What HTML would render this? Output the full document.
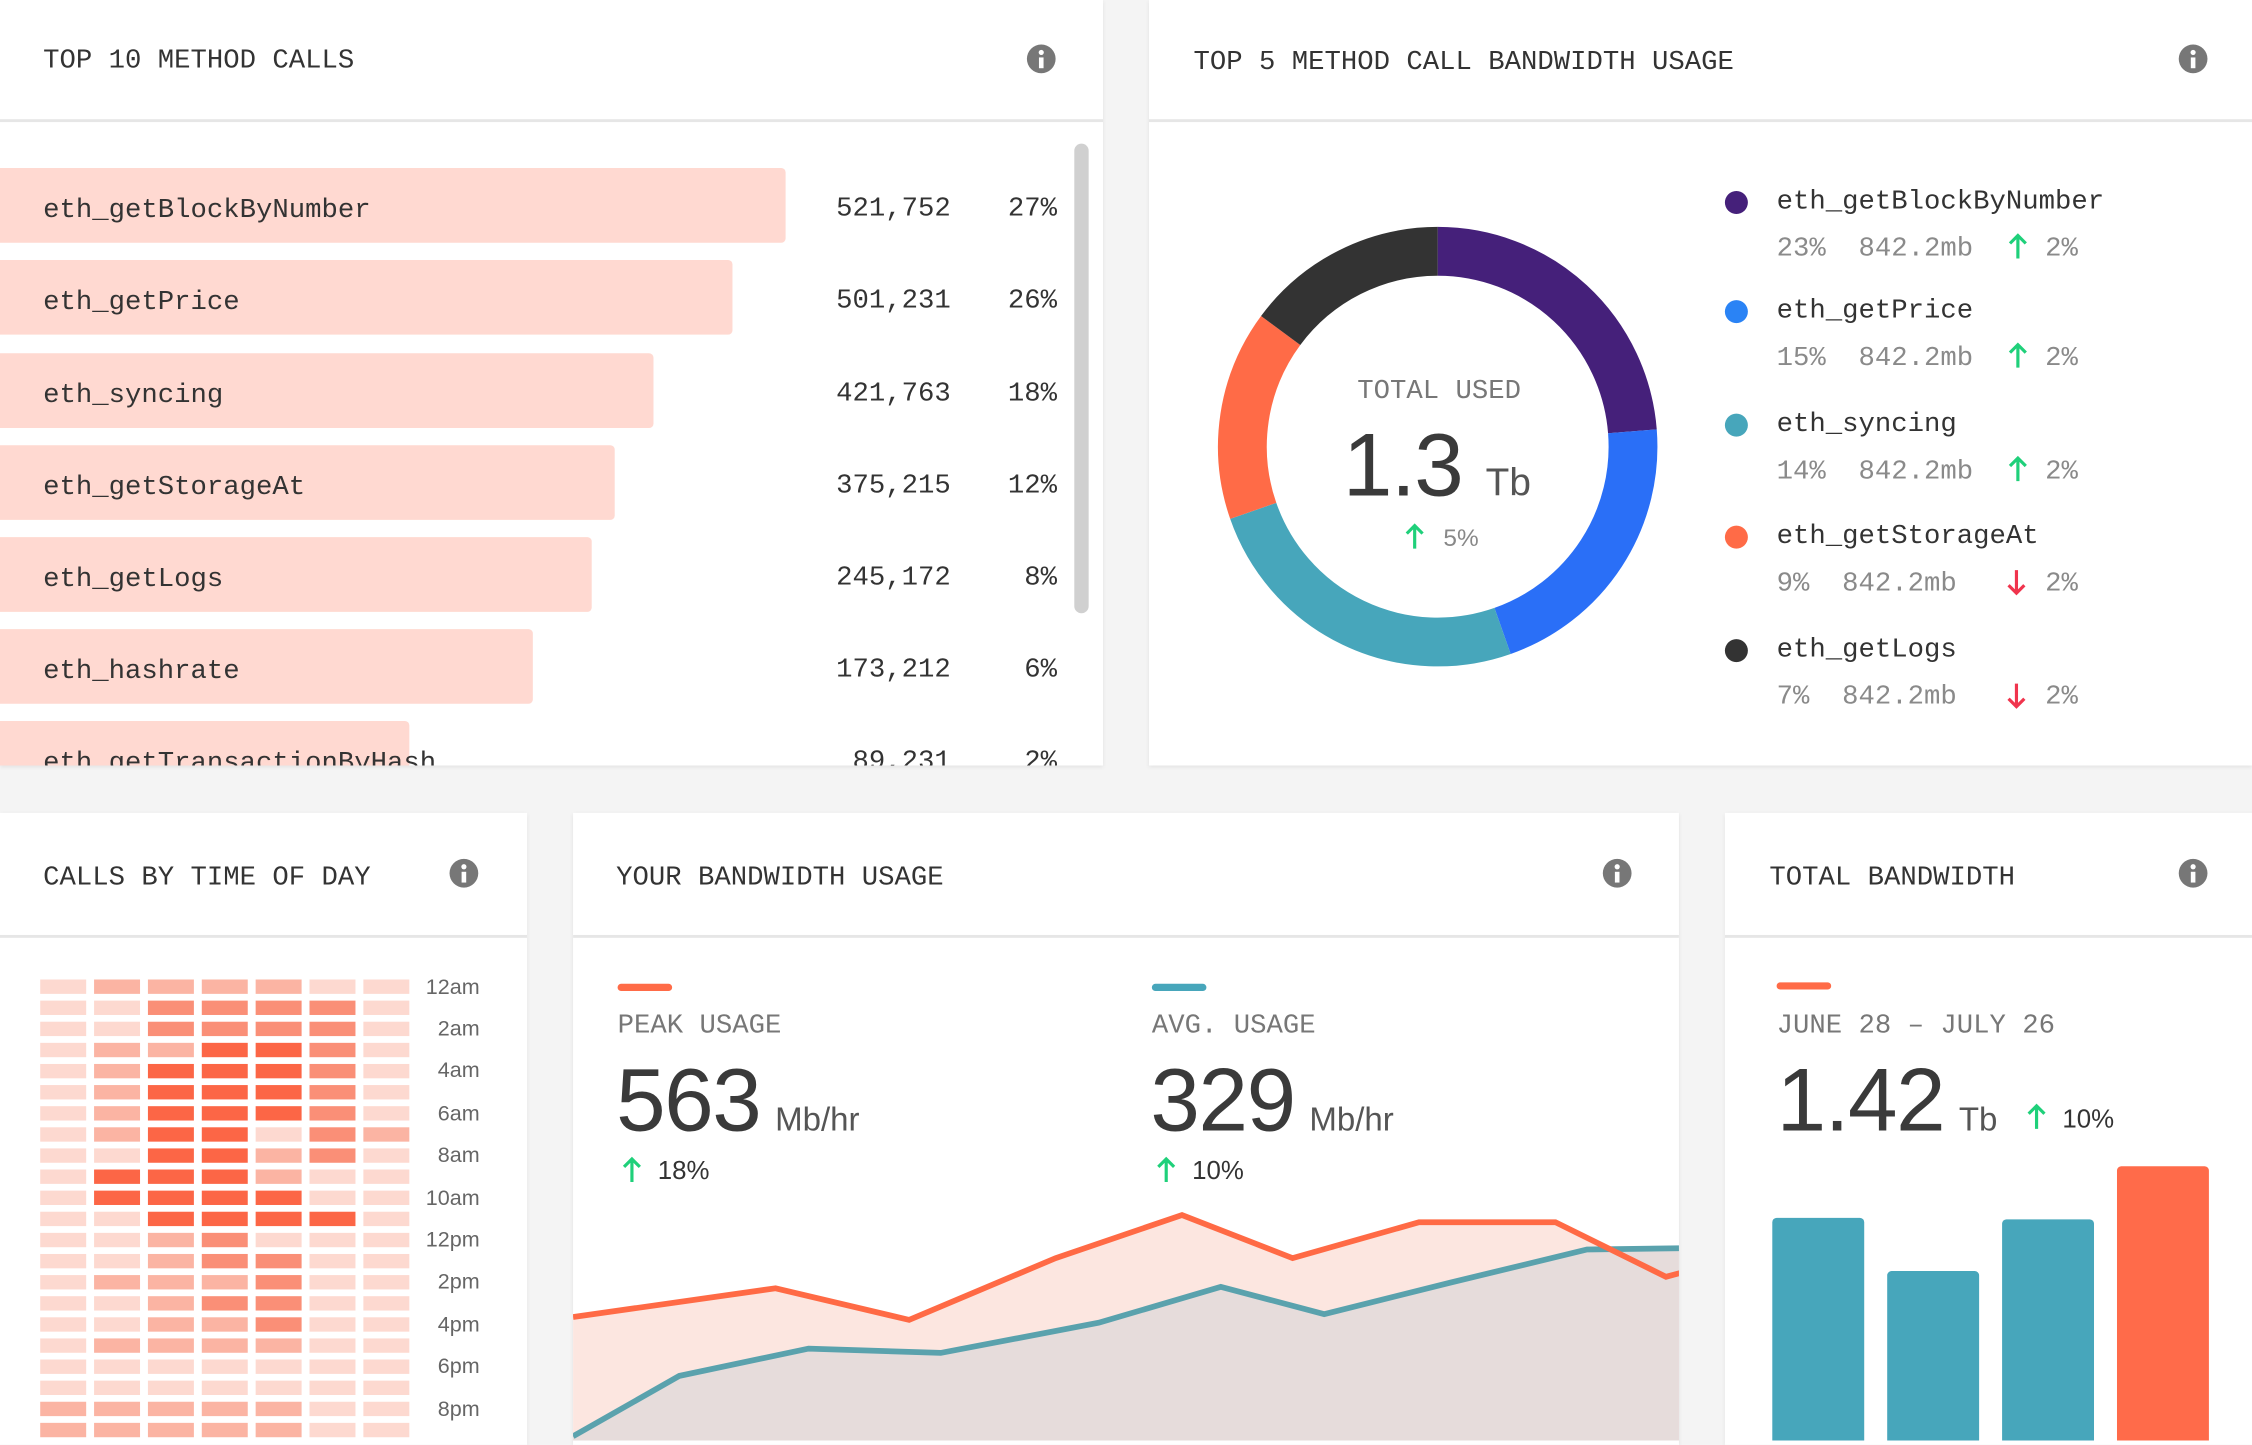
<!DOCTYPE html>
<html><head><meta charset="utf-8"><style>
html,body{margin:0;padding:0;width:2252px;height:1440px;overflow:hidden;background:#f4f4f4}
#w{position:absolute;left:0;top:0;width:1568px;height:1003px;transform:scale(1.43622);transform-origin:0 0;font-family:"Liberation Mono",monospace;color:#333}
.card{position:absolute;background:#fff;box-shadow:0 1px 3px rgba(0,0,0,.08);overflow:hidden}
.hd{position:absolute;left:0;right:0;top:0;border-bottom:2px solid #e6e6e6}
.t{position:absolute;font-size:19px;white-space:pre;line-height:1}
.bar{position:absolute;left:0;height:52px;background:#ffd9d1;border-radius:0 3px 3px 0}
.nm{position:absolute;left:30px;font-size:19px;line-height:52px;margin-top:3px}
.num{position:absolute;right:106px;font-size:19px;line-height:52px;text-align:right;margin-top:2px}
.pc{position:absolute;right:32px;font-size:19px;line-height:52px;text-align:right;margin-top:2px}
.g{color:#8a8a8a}
.sans{font-family:"Liberation Sans",sans-serif}
.big{font-family:"Liberation Sans",sans-serif;font-size:62px;color:#3a3a3a;line-height:1;position:absolute;white-space:nowrap;letter-spacing:-1px}
.big span{font-size:23px;color:#555;letter-spacing:0;margin-left:-6px}
.hl{position:absolute;font-size:15px;color:#666;font-family:"Liberation Sans",sans-serif;text-align:right;width:60px;line-height:1}
rect.h{width:32px;height:10px}
.c1{fill:#fdd9d0}.c2{fill:#fbb4a3}.c3{fill:#fa8f77}.c4{fill:#fc6646}
</style></head><body><div id="w">

<div class="card" style="left:0;top:0;width:768px;height:533px">
 <div class="hd" style="height:83px"></div>
 <div class="t" style="left:30px;top:33px">TOP 10 METHOD CALLS</div>
 <div class="bar" style="top:117px;width:547px"></div><div class="nm" style="top:117px">eth_getBlockByNumber</div><div class="num" style="top:117px">521,752</div><div class="pc" style="top:117px">27%</div>
 <div class="bar" style="top:181px;width:510px"></div><div class="nm" style="top:181px">eth_getPrice</div><div class="num" style="top:181px">501,231</div><div class="pc" style="top:181px">26%</div>
 <div class="bar" style="top:246px;width:455px"></div><div class="nm" style="top:246px">eth_syncing</div><div class="num" style="top:246px">421,763</div><div class="pc" style="top:246px">18%</div>
 <div class="bar" style="top:310px;width:428px"></div><div class="nm" style="top:310px">eth_getStorageAt</div><div class="num" style="top:310px">375,215</div><div class="pc" style="top:310px">12%</div>
 <div class="bar" style="top:374px;width:412px"></div><div class="nm" style="top:374px">eth_getLogs</div><div class="num" style="top:374px">245,172</div><div class="pc" style="top:374px">8%</div>
 <div class="bar" style="top:438px;width:371px"></div><div class="nm" style="top:438px">eth_hashrate</div><div class="num" style="top:438px">173,212</div><div class="pc" style="top:438px">6%</div>
 <div class="bar" style="top:502px;width:285px"></div><div class="nm" style="top:502px">eth_getTransactionByHash</div><div class="num" style="top:502px">89,231</div><div class="pc" style="top:502px">2%</div>
 <div style="position:absolute;left:748px;top:100px;width:10px;height:327px;background:#d0d0d0;border-radius:5px"></div>
</div>

<div class="card" style="left:800px;top:0;width:768px;height:533px">
 <div class="hd" style="height:83px"></div>
 <div class="t" style="left:31px;top:34px">TOP 5 METHOD CALL BANDWIDTH USAGE</div>
 <div class="t g" style="left:145px;top:263px;color:#777">TOTAL USED</div>
 <div class="big" style="left:135px;top:294px">1.3 <span style="font-size:27px;margin-left:0">Tb</span></div>
 <div class="t sans g" style="left:205px;top:366px;font-size:17px;color:#888">5%</div>
 <div class="t" style="left:437px;top:131px">eth_getBlockByNumber</div>
 <div class="t g" style="left:437px;top:164px">23%  842.2mb</div><div class="t g" style="left:624px;top:164px">2%</div>
 <div class="t" style="left:437px;top:207px">eth_getPrice</div>
 <div class="t g" style="left:437px;top:240px">15%  842.2mb</div><div class="t g" style="left:624px;top:240px">2%</div>
 <div class="t" style="left:437px;top:286px">eth_syncing</div>
 <div class="t g" style="left:437px;top:319px">14%  842.2mb</div><div class="t g" style="left:624px;top:319px">2%</div>
 <div class="t" style="left:437px;top:364px">eth_getStorageAt</div>
 <div class="t g" style="left:437px;top:397px">9%  842.2mb</div><div class="t g" style="left:624px;top:397px">2%</div>
 <div class="t" style="left:437px;top:443px">eth_getLogs</div>
 <div class="t g" style="left:437px;top:476px">7%  842.2mb</div><div class="t g" style="left:624px;top:476px">2%</div>
</div>

<div class="card" style="left:0;top:566px;width:367px;height:440px">
 <div class="hd" style="height:85px"></div>
 <div class="t" style="left:30px;top:36px">CALLS BY TIME OF DAY</div>
</div>
<div class="card" style="left:399px;top:566px;width:770px;height:440px">
 <div class="hd" style="height:85px"></div>
 <div class="t" style="left:30px;top:36px">YOUR BANDWIDTH USAGE</div>
 <div class="t" style="left:31px;top:139px;color:#777">PEAK USAGE</div>
 <div class="big" style="left:30px;top:170px">563 <span>Mb/hr</span></div>
 <div class="t sans" style="left:59px;top:240px;font-size:18px">18%</div>
 <div class="t" style="left:403px;top:139px;color:#777">AVG. USAGE</div>
 <div class="big" style="left:402px;top:170px">329 <span>Mb/hr</span></div>
 <div class="t sans" style="left:431px;top:240px;font-size:18px">10%</div>
</div>
<div class="card" style="left:1201px;top:566px;width:370px;height:440px">
 <div class="hd" style="height:85px"></div>
 <div class="t" style="left:36px;top:139px;color:#777">JUNE 28 – JULY 26</div>
 <div class="t" style="left:31px;top:36px">TOTAL BANDWIDTH</div>
 <div class="big" style="left:36px;top:170px">1.42 <span>Tb</span></div>
 <div class="t sans" style="left:235px;top:204px;font-size:18px">10%</div>
</div>

<svg style="position:absolute;left:0;top:0" width="1568" height="1003" viewBox="0 0 1568 1003">
 <defs>
  <clipPath id="lc"><rect x="399" y="652" width="770" height="351"/></clipPath>
  <g id="info"><circle r="10" fill="#777"/><circle cy="-4.5" r="1.8" fill="#fff"/><rect x="-1.6" y="-1" width="3.2" height="7.5" fill="#fff"/></g>
  <path id="up" d="M0 8 V-8 M-5.5 -2.5 L0 -8 L5.5 -2.5" fill="none" stroke="#1fd07a" stroke-width="2.2"/>
  <path id="dn" d="M0 -8 V8 M-5.5 2.5 L0 8 L5.5 2.5" fill="none" stroke="#f0344d" stroke-width="2.2"/>
 </defs>
 <use href="#info" x="725" y="41"/><use href="#info" x="1527" y="41"/>
 <use href="#info" x="323" y="608"/><use href="#info" x="1126" y="608"/><use href="#info" x="1527" y="608"/>
 <g fill="none" stroke-width="34">
  <path d="M1001 175 A136 136 0 0 1 1136.6 300.3" stroke="#45207a"/>
  <path d="M1136.6 300.3 A136 136 0 0 1 1046.2 439.3" stroke="#2a6ff7"/>
  <path d="M1046.2 439.3 A136 136 0 0 1 872.6 355.7" stroke="#47a6bb"/>
  <path d="M872.6 355.7 A136 136 0 0 1 891.7 230.1" stroke="#ff6b47"/>
  <path d="M891.7 230.1 A136 136 0 0 1 1001 175" stroke="#333"/>
 </g>
 <use href="#up" x="985" y="374"/>
 <circle cx="1209" cy="141" r="8" fill="#45207a"/><circle cx="1209" cy="217" r="8" fill="#2a83f5"/>
 <circle cx="1209" cy="296" r="8" fill="#47a6bb"/><circle cx="1209" cy="374" r="8" fill="#ff6b47"/><circle cx="1209" cy="453" r="8" fill="#333"/>
 <use href="#up" x="1405" y="172"/><use href="#up" x="1405" y="248"/><use href="#up" x="1405" y="327"/>
 <use href="#dn" x="1404" y="405"/><use href="#dn" x="1404" y="484"/>
 <rect x="430" y="685" width="38" height="5" rx="2.5" fill="#ff6b47"/>
 <rect x="802" y="685" width="38" height="5" rx="2.5" fill="#47a6bb"/>
 <use href="#up" x="440" y="815"/><use href="#up" x="812" y="815"/>
 <g clip-path="url(#lc)">
  <path d="M399 917 L540 897 L633 919 L735 876 L823 846 L900 876 L988 851 L1083 851 L1160 889 L1175 885 V1003 H399Z" fill="#fce6e0"/>
  <path d="M399 1000 L473 958 L563 939 L655 942 L765 921 L850 896 L922 915 L1010 893 L1105 870 L1175 869 V1003 H399Z" fill="#e6dcdb"/>
  <path d="M399 1000 L473 958 L563 939 L655 942 L765 921 L850 896 L922 915 L1010 893 L1105 870 L1175 869" fill="none" stroke="#5aa2ad" stroke-width="4"/>
  <path d="M399 917 L540 897 L633 919 L735 876 L823 846 L900 876 L988 851 L1083 851 L1160 889 L1175 885" fill="none" stroke="#ff6a45" stroke-width="4"/>
 </g>
 <rect x="1237" y="684" width="38" height="5" rx="2.5" fill="#ff6b47"/>
 <use href="#up" x="1418" y="778"/>
 <rect x="1234" y="848" width="64" height="170" rx="3" fill="#47a6bb"/>
 <rect x="1314" y="885" width="64" height="130" rx="3" fill="#47a6bb"/>
 <rect x="1394" y="849" width="64" height="170" rx="3" fill="#47a6bb"/>
 <rect x="1474" y="812" width="64" height="200" rx="3" fill="#ff6b4a"/>
 <g>
  <g transform="translate(0,682)"><rect class="h c1" x="28"/><rect class="h c2" x="65.5"/><rect class="h c2" x="103"/><rect class="h c2" x="140.5"/><rect class="h c2" x="178"/><rect class="h c1" x="215.5"/><rect class="h c1" x="253"/></g>
  <g transform="translate(0,696.7)"><rect class="h c1" x="28"/><rect class="h c1" x="65.5"/><rect class="h c3" x="103"/><rect class="h c3" x="140.5"/><rect class="h c3" x="178"/><rect class="h c3" x="215.5"/><rect class="h c1" x="253"/></g>
  <g transform="translate(0,711.4)"><rect class="h c1" x="28"/><rect class="h c1" x="65.5"/><rect class="h c3" x="103"/><rect class="h c3" x="140.5"/><rect class="h c3" x="178"/><rect class="h c3" x="215.5"/><rect class="h c1" x="253"/></g>
  <g transform="translate(0,726.1)"><rect class="h c1" x="28"/><rect class="h c2" x="65.5"/><rect class="h c2" x="103"/><rect class="h c4" x="140.5"/><rect class="h c4" x="178"/><rect class="h c3" x="215.5"/><rect class="h c1" x="253"/></g>
  <g transform="translate(0,740.8)"><rect class="h c1" x="28"/><rect class="h c2" x="65.5"/><rect class="h c4" x="103"/><rect class="h c4" x="140.5"/><rect class="h c4" x="178"/><rect class="h c3" x="215.5"/><rect class="h c1" x="253"/></g>
  <g transform="translate(0,755.5)"><rect class="h c1" x="28"/><rect class="h c2" x="65.5"/><rect class="h c4" x="103"/><rect class="h c4" x="140.5"/><rect class="h c4" x="178"/><rect class="h c3" x="215.5"/><rect class="h c1" x="253"/></g>
  <g transform="translate(0,770.2)"><rect class="h c1" x="28"/><rect class="h c2" x="65.5"/><rect class="h c4" x="103"/><rect class="h c4" x="140.5"/><rect class="h c4" x="178"/><rect class="h c3" x="215.5"/><rect class="h c1" x="253"/></g>
  <g transform="translate(0,784.9)"><rect class="h c1" x="28"/><rect class="h c2" x="65.5"/><rect class="h c4" x="103"/><rect class="h c4" x="140.5"/><rect class="h c1" x="178"/><rect class="h c3" x="215.5"/><rect class="h c2" x="253"/></g>
  <g transform="translate(0,799.6)"><rect class="h c1" x="28"/><rect class="h c1" x="65.5"/><rect class="h c4" x="103"/><rect class="h c4" x="140.5"/><rect class="h c2" x="178"/><rect class="h c3" x="215.5"/><rect class="h c1" x="253"/></g>
  <g transform="translate(0,814.3)"><rect class="h c1" x="28"/><rect class="h c4" x="65.5"/><rect class="h c4" x="103"/><rect class="h c4" x="140.5"/><rect class="h c2" x="178"/><rect class="h c1" x="215.5"/><rect class="h c1" x="253"/></g>
  <g transform="translate(0,829)"><rect class="h c1" x="28"/><rect class="h c4" x="65.5"/><rect class="h c4" x="103"/><rect class="h c4" x="140.5"/><rect class="h c4" x="178"/><rect class="h c1" x="215.5"/><rect class="h c1" x="253"/></g>
  <g transform="translate(0,843.7)"><rect class="h c1" x="28"/><rect class="h c1" x="65.5"/><rect class="h c4" x="103"/><rect class="h c4" x="140.5"/><rect class="h c4" x="178"/><rect class="h c4" x="215.5"/><rect class="h c1" x="253"/></g>
  <g transform="translate(0,858.4)"><rect class="h c1" x="28"/><rect class="h c1" x="65.5"/><rect class="h c2" x="103"/><rect class="h c3" x="140.5"/><rect class="h c1" x="178"/><rect class="h c1" x="215.5"/><rect class="h c1" x="253"/></g>
  <g transform="translate(0,873.1)"><rect class="h c1" x="28"/><rect class="h c1" x="65.5"/><rect class="h c2" x="103"/><rect class="h c3" x="140.5"/><rect class="h c3" x="178"/><rect class="h c1" x="215.5"/><rect class="h c1" x="253"/></g>
  <g transform="translate(0,887.8)"><rect class="h c1" x="28"/><rect class="h c2" x="65.5"/><rect class="h c2" x="103"/><rect class="h c2" x="140.5"/><rect class="h c3" x="178"/><rect class="h c1" x="215.5"/><rect class="h c1" x="253"/></g>
  <g transform="translate(0,902.5)"><rect class="h c1" x="28"/><rect class="h c1" x="65.5"/><rect class="h c2" x="103"/><rect class="h c3" x="140.5"/><rect class="h c3" x="178"/><rect class="h c1" x="215.5"/><rect class="h c1" x="253"/></g>
  <g transform="translate(0,917.2)"><rect class="h c1" x="28"/><rect class="h c1" x="65.5"/><rect class="h c2" x="103"/><rect class="h c2" x="140.5"/><rect class="h c3" x="178"/><rect class="h c1" x="215.5"/><rect class="h c1" x="253"/></g>
  <g transform="translate(0,931.9)"><rect class="h c1" x="28"/><rect class="h c2" x="65.5"/><rect class="h c2" x="103"/><rect class="h c2" x="140.5"/><rect class="h c2" x="178"/><rect class="h c1" x="215.5"/><rect class="h c1" x="253"/></g>
  <g transform="translate(0,946.6)"><rect class="h c1" x="28"/><rect class="h c1" x="65.5"/><rect class="h c1" x="103"/><rect class="h c1" x="140.5"/><rect class="h c1" x="178"/><rect class="h c1" x="215.5"/><rect class="h c1" x="253"/></g>
  <g transform="translate(0,961.3)"><rect class="h c1" x="28"/><rect class="h c1" x="65.5"/><rect class="h c1" x="103"/><rect class="h c1" x="140.5"/><rect class="h c1" x="178"/><rect class="h c1" x="215.5"/><rect class="h c1" x="253"/></g>
  <g transform="translate(0,976)"><rect class="h c2" x="28"/><rect class="h c2" x="65.5"/><rect class="h c2" x="103"/><rect class="h c2" x="140.5"/><rect class="h c2" x="178"/><rect class="h c1" x="215.5"/><rect class="h c1" x="253"/></g>
  <g transform="translate(0,990.7)"><rect class="h c2" x="28"/><rect class="h c2" x="65.5"/><rect class="h c2" x="103"/><rect class="h c2" x="140.5"/><rect class="h c2" x="178"/><rect class="h c1" x="215.5"/><rect class="h c1" x="253"/></g>
 </g>
</svg>
<div class="hl" style="left:274px;top:680px">12am</div>
<div class="hl" style="left:274px;top:709px">2am</div>
<div class="hl" style="left:274px;top:738px">4am</div>
<div class="hl" style="left:274px;top:768px">6am</div>
<div class="hl" style="left:274px;top:797px">8am</div>
<div class="hl" style="left:274px;top:827px">10am</div>
<div class="hl" style="left:274px;top:856px">12pm</div>
<div class="hl" style="left:274px;top:885px">2pm</div>
<div class="hl" style="left:274px;top:915px">4pm</div>
<div class="hl" style="left:274px;top:944px">6pm</div>
<div class="hl" style="left:274px;top:974px">8pm</div>
</div></body></html>
